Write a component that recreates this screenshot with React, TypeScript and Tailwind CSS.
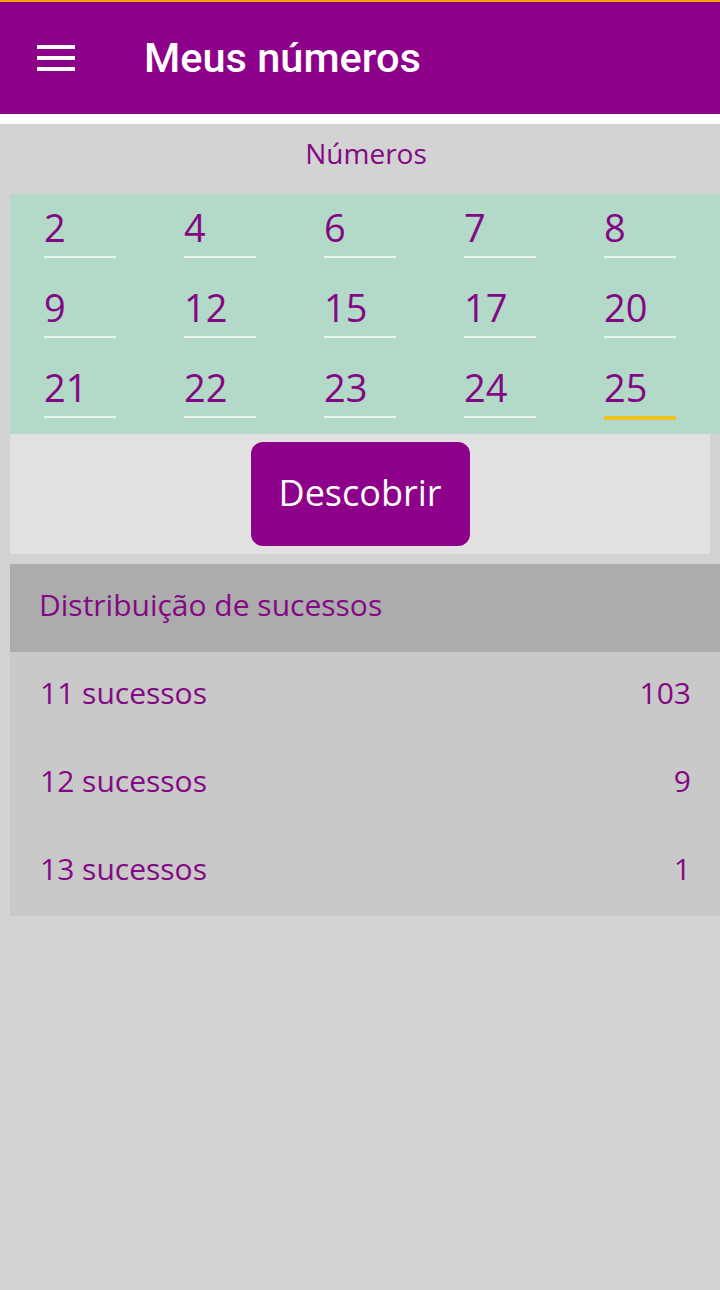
import React from 'react';

const numbers = [2, 4, 6, 7, 8, 9, 12, 15, 17, 20, 21, 22, 23, 24, 25];

const distribution = [
  { label: '11 sucessos', count: 103 },
  { label: '12 sucessos', count: 9 },
  { label: '13 sucessos', count: 1 },
];

const App: React.FC = () => {
  return (
    <div className="w-[720px] min-h-[1290px] bg-[#d3d3d3] font-['Open_Sans','Noto_Sans',sans-serif] text-[#840884]">
      {/* Status strip + toolbar */}
      <div className="h-[2px] bg-[#f2a30f]" />
      <header className="h-[112px] bg-[#8d008a] flex items-center">
        <button className="ml-[32px] w-[48px] h-[48px] flex flex-col items-center justify-center gap-[7px]">
          <span className="block w-[38px] h-[4px] bg-white" />
          <span className="block w-[38px] h-[4px] bg-white" />
          <span className="block w-[38px] h-[4px] bg-white" />
        </button>
        <h1 className="ml-[64px] text-[41.5px] font-medium text-white font-['Roboto',sans-serif] leading-none">
          Meus números
        </h1>
      </header>
      <div className="h-[10px] bg-white" />

      {/* Numbers */}
      <div className="h-[70px] flex items-center justify-center pl-[12px] pb-[12px] text-[28px] leading-none">Números</div>
      <div className="ml-[10px] h-[240px] bg-[#b3d9c8] pl-[34px] grid grid-cols-[repeat(5,140px)]">
        {numbers.map((n, i) => {
          const focused = i === numbers.length - 1;
          return (
            <div key={n} className="h-[80px]">
              <div
                className={
                  focused
                    ? 'w-[72px] pt-[14px] pb-[10px] border-b-4 border-[#efc31d]'
                    : 'w-[72px] pt-[14px] pb-[10px] border-b-2 border-[#e9f6ef]'
                }
              >
                <span className="block text-[38px] leading-[38px]">{n}</span>
              </div>
            </div>
          );
        })}
      </div>

      {/* Action */}
      <div className="mx-[10px] h-[120px] bg-[#e1e1e1] flex justify-center pt-[8px]">
        <button className="w-[219px] h-[104px] rounded-[12px] bg-[#8d008a] text-white text-[36px] leading-none flex items-center justify-center pb-[2px]">
          Descobrir
        </button>
      </div>

      {/* Distribution */}
      <div className="ml-[10px] mt-[10px]">
        <div className="h-[88px] bg-[#acacac] flex items-center pl-[29px] pb-[6px] text-[30px] leading-none">
          Distribuição de sucessos
        </div>
        {distribution.map((d) => (
          <div key={d.label} className="h-[88px] bg-[#c9c9c9] flex items-center justify-between pl-[30px] pr-[29px] pb-[6px] text-[30px] leading-none">
            <span>{d.label}</span>
            <span>{d.count}</span>
          </div>
        ))}
      </div>
    </div>
  );
};

export default App;
